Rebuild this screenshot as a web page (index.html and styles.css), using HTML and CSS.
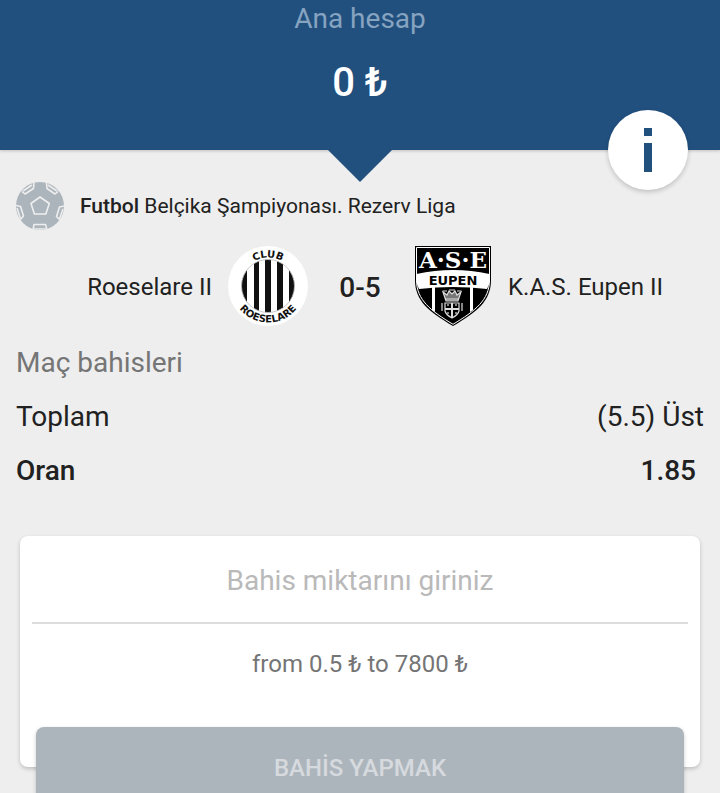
FILE: index.html
```
<!DOCTYPE html>
<html lang="tr">
<head>
  <meta charset="UTF-8" />
  <meta name="viewport" content="width=device-width, initial-scale=1" />
  <title>Bahis Kuponu</title>
  <link rel="stylesheet" href="styles.css">
</head>
<body>

  <!-- Account balance -->
  <header class="account">
    <div class="account-label">Ana hesap</div>
    <div class="account-balance">0 ₺</div>
    <button class="info-button" type="button" aria-label="Bilgi">
      <svg width="80" height="80" viewBox="0 0 80 80" fill="#21507f">
        <rect x="36" y="18" width="8" height="8" />
        <rect x="36" y="33" width="8" height="29" />
      </svg>
    </button>
  </header>

  <main class="coupon">

    <!-- League -->
    <div class="league">
      <svg class="league-icon" viewBox="0 0 48 48" fill="none" stroke="#eeeeee" stroke-width="1.600" stroke-linejoin="round">
        <defs>
          <clipPath id="ball"><circle cx="24" cy="24" r="24" /></clipPath>
        </defs>
        <circle cx="24" cy="24" r="24" fill="#adb5bc" stroke="none" />
        <g clip-path="url(#ball)">
          <path d="M24 15L33.300 21.500L29.800 32H18.400L15 21.500Z" />
          <path d="M6 9.500L9 12L17.500 6.500L18 1" />
          <path d="M42 9.500L39 12L31 6.500L30.500 1" />
          <path d="M0 23.500L4.500 24.500L7.500 34L4 38" />
          <path d="M48 24L43.500 25L40.500 34.500L44 38" />
          <path d="M17 48L18 42.500H29.500L31 48" />
          <path d="M7 9L16 3M41 9L32 3M1 26L4.500 37M47 27L43.500 37M18 47H30" />
        </g>
      </svg>
      <div class="league-name"><span class="strong">Futbol</span> Belçika Şampiyonası. Rezerv Liga</div>
    </div>

    <!-- Teams and score -->
    <div class="match">
      <div class="team team-home">Roeselare II</div>

      <svg class="team-logo" viewBox="0 0 80 80">
        <defs>
          <clipPath id="stripes"><circle cx="40" cy="40" r="26.500" /></clipPath>
          <path id="arc-top" d="M11.500 40A28.500 28.500 0 0 1 68.500 40" />
          <path id="arc-bottom" d="M3.500 40A36.500 36.500 0 0 0 76.500 40" />
        </defs>
        <circle cx="40" cy="40" r="40" fill="#ffffff" />
        <g clip-path="url(#stripes)" fill="#111111">
          <rect x="13" y="13" width="6" height="54" />
          <rect x="26" y="13" width="5" height="54" />
          <rect x="37" y="13" width="6" height="54" />
          <rect x="49" y="13" width="6" height="54" />
          <rect x="61" y="13" width="6" height="54" />
        </g>
        <circle cx="40" cy="40" r="26.500" fill="none" stroke="#bbbbbb" stroke-width="0.800" />
        <g class="crest-text" fill="#111111" text-anchor="middle">
          <text><textPath href="#arc-top" startOffset="50%">CLUB</textPath></text>
          <text><textPath href="#arc-bottom" startOffset="50%">ROESELARE</textPath></text>
        </g>
      </svg>

      <div class="score">0-5</div>

      <svg class="team-logo" viewBox="-1 0 80 80">
        <path d="M2 0H78V34C78 55 64 66 40 80C16 66 2 55 2 34Z" fill="#000000" />
        <path d="M3.500 1.500H76.500V34C76.500 54 62 65 40 78.300C18 65 3.500 54 3.500 34Z" fill="none" stroke="#ffffff" stroke-width="1" />
        <path d="M3.500 28Q40 20 76.500 28V37Q75 41 74 43Q40 39 6 43Q4 39 3.500 36Z" fill="#ffffff" />
        <path d="M19 41H22V66L19 64ZM57 41H60V64L57 66Z" fill="#ffffff" />
        <g text-anchor="middle">
          <text class="shield-initials" x="40" y="22" fill="#ffffff">A·S·E</text>
          <text class="shield-name" x="40" y="39" fill="#000000">EUPEN</text>
        </g>
        <!-- Crown and small arms -->
        <g fill="none" stroke="#dddddd" stroke-width="1.200">
          <path d="M30 46L33 55H45L48 46L44 49L42 45L39 48L36 45L34 49Z" fill="#777777" />
          <path d="M30 45H34M36 44H42M44 45H48M32 53H46" />
          <path d="M32 57H46V65Q45 69 39 72Q33 69 32 65Z" />
          <path d="M39 57V72M32 63H46" stroke-width="2" />
          <path d="M35 58V60M43 58V60M35 66V68M43 66V68M29 57V65M49 57V65" />
        </g>
      </svg>

      <div class="team">K.A.S. Eupen II</div>
    </div>

    <!-- Selected bet -->
    <div class="bet">
      <div class="bet-row bet-group">Maç bahisleri</div>
      <div class="bet-row"><span>Toplam</span><span>(5.5) Üst</span></div>
      <div class="bet-row strong"><span>Oran</span><span class="odds">1.85</span></div>
    </div>

    <!-- Stake -->
    <form class="stake">
      <div class="stake-card">
        <input class="stake-input" type="text" inputmode="decimal" placeholder="Bahis miktarını giriniz" aria-label="Bahis miktarını giriniz" />
        <div class="stake-limits">from 0.5 ₺ to 7800 ₺</div>
      </div>
      <button class="stake-button" type="submit" disabled>BAHİS YAPMAK</button>
    </form>

  </main>

</body>
</html>
```

FILE: styles.css
```
* {
  box-sizing: border-box;
}

body {
  margin: 0;
  height: 100vh;
  overflow: hidden;
  background: #eeeeee;
  color: #212121;
  font-family: Roboto, "Noto Sans", sans-serif;
  font-size: 24px;
}

.strong {
  font-weight: 500;
}

/* Account balance */
.account {
  position: relative;
  padding: 1px 0 43px;
  background: #21507f;
  color: #ffffff;
  text-align: center;
  box-shadow: 0 1px 3px rgba(0, 0, 0, 0.2);
}

/* Arrow under the header */
.account::after {
  content: "";
  position: absolute;
  top: 100%;
  left: 50%;
  margin-left: -32px;
  border: 32px solid transparent;
  border-top-color: #21507f;
  border-bottom: 0;
}

.account-label {
  color: #86a3c0;
  font-size: 28px;
  line-height: 36px;
}

.account-balance {
  margin-top: 22px;
  font-size: 40px;
  font-weight: 500;
  line-height: 48px;
}

.info-button {
  position: absolute;
  right: 32px;
  bottom: -40px;
  width: 80px;
  height: 80px;
  padding: 0;
  border: 0;
  border-radius: 50%;
  background: #ffffff;
  box-shadow: 0 2px 5px rgba(0, 0, 0, 0.2);
}

.info-button svg {
  display: block;
}

/* League */
.coupon {
  padding-top: 32px;
}

.league {
  display: flex;
  align-items: center;
  gap: 16px;
  padding: 0 16px;
}

.league-icon {
  width: 48px;
  height: 48px;
}

.league-name {
  font-size: 21px;
}

/* Match */
.match {
  display: grid;
  grid-template-columns: 1fr 80px 104px 80px 1fr;
  align-items: center;
  margin-top: 16px;
}

.team {
  padding: 2px 16px 0;
}

.team-home {
  text-align: right;
}

.team-logo {
  display: block;
  width: 80px;
  height: 80px;
}

.crest-text {
  font: bold 10px "DejaVu Sans", sans-serif;
}

.shield-initials {
  font: bold 23px "DejaVu Serif", serif;
}

.shield-name {
  font: bold 13px "DejaVu Sans", sans-serif;
}

.score {
  padding-top: 2px;
  font-size: 28px;
  font-weight: 500;
  text-align: center;
}

/* Selected bet */
.bet {
  margin-top: 10px;
  padding: 0 16px;
  font-size: 28px;
}

.bet-row {
  display: flex;
  justify-content: space-between;
  line-height: 54px;
}

.bet-group {
  color: #757575;
}

.odds {
  padding-right: 8px;
}

/* Stake */
.stake {
  margin-top: 38px;
  padding: 0 20px;
}

.stake-card {
  padding: 0 12px 63px;
  border-radius: 8px;
  background: #ffffff;
  box-shadow: 0 2px 4px rgba(0, 0, 0, 0.2);
}

.stake-input {
  display: block;
  width: 100%;
  height: 88px;
  padding: 2px 0 0;
  border: 0;
  border-bottom: 2px solid #dddddd;
  border-radius: 0;
  outline: 0;
  background: transparent;
  color: #212121;
  font-family: inherit;
  font-size: 28px;
  text-align: center;
}

.stake-input::placeholder {
  color: #b9b9b9;
}

.stake-limits {
  color: #757575;
  line-height: 80px;
  text-align: center;
}

.stake-button {
  position: relative;
  display: block;
  width: calc(100% - 32px);
  height: 80px;
  margin: -40px auto 0;
  padding: 2px 0 0;
  border: 0;
  border-radius: 8px;
  background: #adb5bc;
  color: #d6dade;
  font-family: inherit;
  font-size: 24px;
  font-weight: 500;
  box-shadow: 0 2px 4px rgba(0, 0, 0, 0.2);
}
```
